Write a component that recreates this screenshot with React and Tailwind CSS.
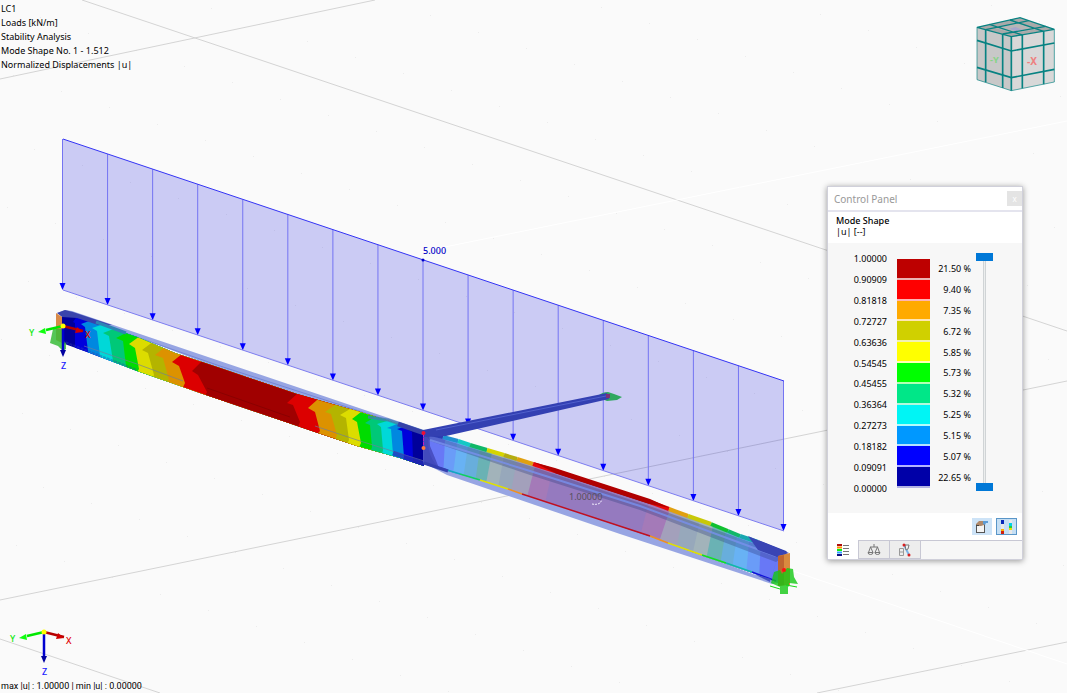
import { useState } from 'react'
import clsx from 'clsx'

const LEGEND = [
  { color: 'bg-[#bd0000]', share: '21.50 %' },
  { color: 'bg-[#ff0000]', share: '9.40 %' },
  { color: 'bg-[#ffaa00]', share: '7.35 %' },
  { color: 'bg-[#d0d000]', share: '6.72 %' },
  { color: 'bg-[#ffff00]', share: '5.85 %' },
  { color: 'bg-[#00ff00]', share: '5.73 %' },
  { color: 'bg-[#00e788]', share: '5.32 %' },
  { color: 'bg-[#00f5f5]', share: '5.25 %' },
  { color: 'bg-[#0098ff]', share: '5.15 %' },
  { color: 'bg-[#0000ff]', share: '5.07 %' },
  { color: 'bg-[#0000a8]', share: '22.65 %' },
]

const VALUES = [
  '1.00000', '0.90909', '0.81818', '0.72727', '0.63636', '0.54545',
  '0.45455', '0.36364', '0.27273', '0.18182', '0.09091', '0.00000',
]

// Each band starts at its own edge and runs to the end of the beam,
// so the next band simply paints over it.
const LEFT_BANDS = [
  ['#00009a', '62,310 62,350'],
  ['#0000dc', '78,315 73,322 75,323 75,348 74,354'],
  ['#0088e0', '92,320 81,324 85,327 88,351 86,358'],
  ['#00d8d8', '104,324 92,328 97,331 100,356 98,364'],
  ['#00c878', '116,328 103,333 109,336 113,361 110,370'],
  ['#00dc00', '128,332 116,338 123,341 126,366 122,376'],
  ['#dcdc00', '140,336 129,344 135,348 139,369 132,380'],
  ['#b4b400', '154,341 142,350 148,353 154,375 148,388'],
  ['#dc9200', '165,347 155,355 163,358 169,380 162,394'],
  ['#dc0000', '182,354 172,362 179,366 185,383 178,398'],
  ['#a00000', '202,361 192,371 198,375 207,392 200,406'],
  ['#dc0000', '297,394 287,403 293,405 300,422 294,436'],
  ['#dc9200', '317,400 308,408 315,412 320,431 312,440'],
  ['#b4b400', '335,405 325,412 331,414 337,435 332,448'],
  ['#dcdc00', '350,409 340,415 346,418 349,440 344,450'],
  ['#00dc00', '361,412 352,419 357,422 361,443 356,454'],
  ['#00c878', '375,417 365,423 370,425 372,447 368,458'],
  ['#00d8d8', '387,421 377,424 381,427 383,450 380,462'],
  ['#0088e0', '397,424 387,428 391,429 393,454 390,464'],
  ['#0000dc', '407,426 397,429 402,431 404,457 400,468'],
  ['#00009a', '414,428 408,430 412,432 413,459 412,470'],
]

const RIGHT_BANDS = [
  ['#4950c4', '423,430 423,470'],
  ['#6878f6', '429,430 430,446 435,458 443,478'],
  ['#6a9cf8', '445,440 443,478'],
  ['#68b2f4', '457,444 452,482'],
  ['#68aedc', '468,446 462,486'],
  ['#6ab2b4', '480,448 474,490'],
  ['#a2b3ba', '492,452 484,494'],
  ['#97a8bb', '504,456 496,498'],
  ['#a3a0bb', '517,460 509,502'],
  ['#a47ab8', '536,462 525,505'],
  ['#957abf', '553,468 543,512'],
  ['#a47ab8', '651,494 639,540'],
  ['#a3a0bb', '671,506 658,545'],
  ['#97a8bb', '684,510 676,550'],
  ['#a2b3ba', '701,516 692,556'],
  ['#6ab2b4', '714,520 706,560'],
  ['#68aedc', '727,524 720,565'],
  ['#68b2f4', '738,528 732,570'],
  ['#6a9cf8', '750,532 746,575'],
  ['#6878f6', '761,536 759,580'],
]

const TOP_FLANGE = [
  ['#2c3cb0', 423, 432, 443, 437],
  ['#2090d0', 443, 437, 458, 441],
  ['#14c8c4', 458, 441, 470, 445],
  ['#10b868', 470, 445, 487, 450],
  ['#d6d400', 487, 450, 504, 455],
  ['#b4ac10', 504, 455, 517, 459],
  ['#e0a010', 517, 459, 533, 464],
  ['#e80808', 533, 464, 555, 471],
  ['#a00000', 555, 471, 650, 502],
  ['#e80808', 650, 502, 669, 509],
  ['#e0a010', 669, 509, 688, 516],
  ['#c8c808', 688, 516, 711, 524],
  ['#10c030', 711, 524, 728, 531],
  ['#10b868', 728, 531, 740, 536],
  ['#18a8b0', 740, 536, 758, 542],
  ['#2c3cb0', 758, 542, 786, 553],
]

const BOTTOM_FLANGE = [
  ['#2838b8', 423, 463, 447, 470],
  ['#10a8c0', 447, 470, 460, 474],
  ['#10d060', 460, 474, 480, 480],
  ['#e0e000', 480, 480, 508, 489],
  ['#f09020', 508, 489, 522, 494],
  ['#c01020', 522, 494, 650, 536],
  ['#f09020', 650, 536, 668, 543],
  ['#e0e000', 668, 543, 702, 555],
  ['#10e020', 702, 555, 726, 563],
  ['#10b8a8', 726, 563, 752, 572],
  ['#1010d8', 752, 572, 776, 581],
]

function gridDots() {
  const dots = []
  for (let i = -20; i <= 24; i++) {
    for (let j = -8; j <= 8; j++) {
      const x = Math.round(520 + i * 48 + j * 123)
      const y = Math.round(180 + i * 16.3 - j * 25.2)
      if (x > 0 && x < 1067 && y > 0 && y < 693) dots.push([x, y])
    }
  }
  return dots
}

const DOTS = gridDots()
const ARROWS = Array.from({ length: 17 }, (_, i) => {
  const t = i / 16
  return { x: 62.5 + 721 * t, top: 139 + 242 * t, tip: 290 + 241 * t }
})

function LoadDiagram() {
  return (
    <g>
      <polygon points="63,139 784,381 784,531 63,290" fill="#0000dc" fillOpacity="0.19" />
      {ARROWS.map((a) => (
        <g key={a.x}>
          <line x1={a.x} y1={a.top} x2={a.x} y2={a.tip - 5} stroke="#7474f2" />
          <path d={`M${a.x - 3} ${a.tip - 7}h6l-3 7z`} fill="#0000ff" />
        </g>
      ))}
      <line x1="63" y1="139" x2="784" y2="381" stroke="#3434f4" />
      <line x1="63" y1="290" x2="784" y2="531" stroke="#7c7cf0" />
      <circle cx="423" cy="260" r="1.5" fill="#0000c8" />
      <text x="423" y="254" fill="#0000c8" className="text-[9px] font-medium">5.000</text>
    </g>
  )
}

function Beam() {
  return (
    <g>
      <defs>
        <clipPath id="leftBeam">
          <path d="M62 314 70 313 87 320 137 337 175 353 220 368 297 394 360 412 405 426 424 431V466L400 458 357 446 315 432 200 393 183 387 137 371 87 352 62 343Z" />
        </clipPath>
        <clipPath id="rightBeam">
          <path d="M423 431 487 450 533 465 650 503 713 526 786 553 779 583 753 573 703 556 655 538 520 493 480 480 423 464Z" />
        </clipPath>
      </defs>

      {/* undeformed beam, left span */}
      <path d="M57 313 65 310 72 311 424 430 424 435 300 396 205 363 140 338Z" fill="#97a5e3" />
      <path d="M68 313 220 366 424 432" stroke="#7486d6" fill="none" />
      <g clipPath="url(#leftBeam)">
        {LEFT_BANDS.map(([color, edge]) => (
          <polygon key={edge} points={`500,300 ${edge} 500,500`} fill={color} />
        ))}
        <path d="M84 346 137 364 183 381 M315 426 357 440 424 461" stroke="#707c9a" strokeOpacity=".65" fill="none" />
        <path d="M62 341 88 351 137 370" stroke="#3040b0" strokeWidth="2" strokeOpacity=".4" strokeDasharray="3 1" fill="none" />
        <path d="M207 388 290 417" stroke="#8a0000" fill="none" />
        <path d="M393 453 424 464" stroke="#2a34b8" strokeWidth="5" strokeOpacity=".7" fill="none" />
      </g>
      <path d="M57 313 65 310 73 312 112 325 98 325 77 318 62 317Z" fill="#3944ac" />
      <path d="M96 322 126 333" stroke="#2f84b4" strokeWidth="3" />
      <path d="M368 417 388 420 424 432" stroke="#4080b0" strokeWidth="3" strokeOpacity=".8" fill="none" />
      <path d="M398 424 424 433" stroke="#3642a8" strokeWidth="5" />

      {/* undeformed beam, right span */}
      <path d="M424 463 460 474 520 493 655 538 778 583 772 584 620 534 447 475Z" fill="#97a5e3" />
      <g clipPath="url(#rightBeam)">
        {RIGHT_BANDS.map(([color, edge]) => (
          <polygon key={edge} points={`850,300 ${edge} 850,700`} fill={color} />
        ))}
        <path d="M423 433 533 467 655 508 786 555 776 562 640 510 530 475 430 441Z" fill="#304080" fillOpacity=".35" />
        <path d="M430 440 530 471 640 506 776 556" stroke="#7890ec" strokeWidth="2" strokeOpacity=".8" fill="none" />
        <path d="M424 435V463L442 470C430 461 428 451 428 438Z" fill="#424abc" />
      </g>
      {TOP_FLANGE.map(([color, x1, y1, x2, y2]) => (
        <line key={x1} x1={x1} y1={y1} x2={x2} y2={y2} stroke={color} strokeWidth="4" />
      ))}
      <path d="M533 462 555 468 650 499 670 508 650 504 555 473Z" fill="#b00000" />
      {BOTTOM_FLANGE.map(([color, x1, y1, x2, y2]) => (
        <line key={x1} x1={x1} y1={y1} x2={x2} y2={y2} stroke={color} strokeWidth="1.5" />
      ))}
      <path d="M424 463 448 471" stroke="#3440b0" strokeWidth="3" />
      <path d="M748 536 789 553 777 557 758 550Z" fill="#3944b4" />
      <path d="M778 556 770 582 754 574 771 579Z" fill="#4450c0" />
      <text x="569" y="500" fill="#55505c" className="text-[9px]">1.00000</text>
      <path d="M592 504q5 1 8-1l2-3" stroke="#f4f0ff" strokeDasharray="2 1" fill="none" />

      {/* lateral member */}
      <path d="M598 396q4-4 10-4l6 2 8 3-5 3-10 1-5-2-6-1z" fill="#30a860" />
      <path d="M423 430 607 393 609 399 446 436 424 437Z" fill="#3340b2" />
      <path d="M436 430 606 396" stroke="#5060cc" />
      <rect x="606" y="394" width="4" height="4" fill="#7c3078" />
      <line x1="423.5" y1="434" x2="423.5" y2="449" stroke="#c020c0" strokeDasharray="3 1" />
      <circle cx="423.5" cy="433" r="2" fill="#f01030" />
      <circle cx="423.5" cy="448" r="2" fill="#ff7a3c" />
    </g>
  )
}

function Supports() {
  return (
    <g>
      <path d="M56 313 62 317V343L56 340Z" fill="#d88a48" />
      <path d="M53 329h9v12l4 2v6l-3 2-5-5-8-3z" fill="#38bc38" fillOpacity=".85" />
      <path d="M778 556 790 553V585L778 586Z" fill="#d98a3e" />
      <path d="M778 556 784 555V585L778 586Z" fill="#c06430" />
      <path d="M774 572 780 570 782 574 787 568 793 569 794 577 798 584 789 583V586L788 587V594H780V587L771 583Z" fill="#14c814" fillOpacity=".8" />
      <path d="M770 586 780 589 M786 585 797 587" stroke="#14d814" fill="none" />
      <circle cx="784" cy="570" r="2" fill="#ff1010" />
    </g>
  )
}

function Axes({ x, y }) {
  return (
    <g transform={`translate(${x} ${y})`}>
      <path d="M0 0 20 5" stroke="#b40000" strokeWidth="2.5" />
      <path d="M14 1 20 6 12 7Z" fill="#d00000" />
      <path d="M0 0-17 4" stroke="#00e800" strokeWidth="2.5" />
      <path d="M-25 6-18 2-17 8Z" fill="#10ff10" />
      <path d="M0 0V24" stroke="#0000d0" strokeWidth="2.5" />
      <path d="M-3 24H3L0 31Z" fill="#0000a0" />
      <circle r="2.5" fill="#ffff00" />
      <text x="-34" y="10" fill="#10e810" className="text-[9px] font-medium">Y</text>
      <text x="22" y="12" fill="#e00000" className="text-[9px] font-medium">X</text>
      <text x="-2" y="43" fill="#2020ff" className="text-[9px] font-medium">Z</text>
    </g>
  )
}

function Scene() {
  return (
    <svg viewBox="0 0 1067 693" className="absolute inset-0 h-full w-full" role="img" aria-label="Mode Shape">
      {DOTS.map(([x, y]) => (
        <rect key={`${x}-${y}`} x={x} y={y} width="1" height="1" fill="#ececec" />
      ))}
      <g stroke="#d4d4d4" fill="none">
        <path d="M82 0 1067 331" />
        <path d="M0 79 375 0" />
        <path d="M0 600 1067 381" />
        <path d="M0 639 160 693" />
        <path d="M817 693 1067 642" />
      </g>
      <g stroke="#ffffff" strokeWidth="1">
        <path d="M420 252 1067 121" />
        <path d="M784 568 1067 664" />
      </g>
      <LoadDiagram />
      <Beam />
      <Supports />
      <Axes x={63} y={326} />
      <Axes x={44} y={632} />
    </svg>
  )
}

function ViewCube() {
  return (
    <svg viewBox="45 30 246 234" className="absolute top-[15px] right-[10px] h-[78px] w-[82px]" role="img" aria-label="View">
      <path d="M51 67 154 95V257L51 224Z" fill="#c8c8c8" />
      <path d="M154 95 283 73V231L154 257Z" fill="#d8d8d8" />
      <path d="M51 67 180 38 283 73 154 95Z" fill="#a9a9a9" />
      <path d="M101 68 173 55 231 72 164 85Z" fill="#b6b6b6" />
      <path d="M148 71 166 66 188 75 165 78Z" fill="#a6a6cc" />
      <g stroke="#078282" fill="none" strokeWidth="5">
        <path d="M154 95V257M77 74V232M128 87V249M187 90V250M251 79V238" />
        <path d="M51 106 154 138 283 114M51 187 154 218 283 193" />
        <path d="M77 74 206 47M128 87 257 64M187 90 88 58M251 79 150 45" strokeWidth="4" />
        <path d="M51 67 180 38 283 73 154 95Z" strokeWidth="4" />
        <path d="M51 67V224L154 257 283 231V73" strokeWidth="2" />
      </g>
      <text x="90" y="175" fill="#86d486" className="text-[28px] font-bold">-Y</text>
      <text x="201" y="180" fill="#ee8080" className="text-[30px] font-bold">-X</text>
    </svg>
  )
}

function DisplayIcon() {
  return (
    <svg viewBox="0 0 14 14" className="h-3.5 w-3.5 shrink-0">
      <rect x="1.5" y="4.5" width="8" height="8" fill="#f4f4f4" stroke="#555" />
      <path d="M1 4 4 1 9 1 9 5 6 6 2 6Z" fill="#b0896a" />
      <path d="M1 5.500h3" stroke="#444" />
      <path d="M8 1h5v2h-2l-1 2-2-1z" fill="#5c9cd6" />
    </svg>
  )
}

function ScaleIcon() {
  return (
    <svg viewBox="0 0 14 14" className="h-3.5 w-3.5 shrink-0">
      <rect x="1" width="3" height="14" fill="#e8e8e8" />
      <rect x="1" width="3" height="4" fill="#0828b8" />
      <rect x="1" y="9" width="3" height="2" fill="#ffb000" />
      <rect x="1" y="11" width="3" height="3" fill="#d02010" />
      <rect x="9" width="3" height="14" fill="#e8e8e8" />
      <rect x="9" y="3" width="3" height="3" fill="#00d0e8" />
      <rect x="9" y="6" width="3" height="2" fill="#20d040" />
      <rect x="9" y="8" width="3" height="2" fill="#e8e000" />
    </svg>
  )
}

function LegendIcon() {
  return (
    <svg viewBox="0 0 12 12" className="h-3 w-3">
      <path d="M0 1h5" stroke="#b01010" strokeWidth="2" />
      <path d="M0 3.500h5" stroke="#ff9000" strokeWidth="2" />
      <path d="M0 6h5" stroke="#10f010" strokeWidth="2" />
      <path d="M0 8.500h5" stroke="#30a0ff" strokeWidth="2" />
      <path d="M0 11h5" stroke="#101080" strokeWidth="2" />
      <path d="M6 1.500h6M6 4.500h6M6 7.500h6M6 10.500h6" stroke="#777" />
    </svg>
  )
}

function BalanceIcon() {
  return (
    <svg viewBox="0 0 14 14" className="h-3.5 w-3.5" fill="none" stroke="#777">
      <path d="M7 1v3M3 4h8M3.500 4 1.500 9.500M3.500 4 6 9.500M10.500 4 8 9.500M10.500 4 12.500 9.500" />
      <path d="M1 9.500h5q0 2-2.500 2T1 9.500M8 9.500h5q0 2-2.500 2T8 9.500" />
    </svg>
  )
}

function FactorIcon() {
  return (
    <svg viewBox="0 0 14 14" className="h-3.5 w-3.5">
      <path d="M1.500 5.500h4v7h-4zM2 9h3" fill="none" stroke="#999" />
      <path d="M6 2 11 12" stroke="#7cb4e8" strokeWidth="2" />
      <path d="M7 2h4l-1 4-2 1z" fill="#f4f4f4" stroke="#777" />
      <circle cx="6" cy="2" r="1.5" fill="#d82020" />
      <circle cx="11" cy="12" r="1.5" fill="#d82020" />
    </svg>
  )
}

const TABS = [
  { id: 'legend', label: 'Color scale', Icon: LegendIcon },
  { id: 'factors', label: 'Factors', Icon: BalanceIcon },
  { id: 'filter', label: 'Filter', Icon: FactorIcon },
]

const RANGE =
  'absolute inset-0 m-0 h-full w-full appearance-none bg-transparent pointer-events-none [writing-mode:vertical-lr] [direction:rtl] ' +
  '[&::-webkit-slider-thumb]:appearance-none [&::-webkit-slider-thumb]:pointer-events-auto [&::-webkit-slider-thumb]:h-2 [&::-webkit-slider-thumb]:w-[17px] [&::-webkit-slider-thumb]:bg-[#0078d7]'

function ControlPanel() {
  const [tab, setTab] = useState('legend')
  const [max, setMax] = useState(11)
  const [min, setMin] = useState(0)

  return (
    <section className="absolute top-[186px] right-11 flex w-[196px] flex-col border border-[#d0d0da] bg-[#f7f7f7] shadow-[0_1px_6px_rgba(0,0,0,0.4)]">
      <header className="flex h-[25px] items-center justify-between border-b-2 border-[#e4e4ee] bg-white pl-1.5">
        <h2 className="text-[10px] text-[#999]">Control Panel</h2>
        <button type="button" aria-label="Close" className="h-[15px] w-[15px] bg-[#e4e4e4] text-[8px] leading-3 text-white">x</button>
      </header>
      <div className="h-[31px] bg-white px-2 pt-[3px] leading-[11px]">
        <h3 className="font-medium">Mode Shape</h3>
        <p>|u| [--]</p>
      </div>

      <div className="flex h-[270px] items-start pt-[10px] pl-6">
        <div className="-mt-1 flex h-[250px] w-[35px] flex-col text-right">
          {VALUES.map((v) => (
            <span key={v} className="flex flex-1 items-center justify-end">{v}</span>
          ))}
        </div>
        <div className="mt-1.5 ml-[10px] flex h-[229px] w-[33px] flex-col">
          {LEGEND.map((l) => (
            <span key={l.share} className={clsx('flex-1 border-b-2 border-white/70', l.color)} />
          ))}
        </div>
        <div className="mt-1.5 flex h-[229px] w-[41px] flex-col">
          {LEGEND.map((l) => (
            <span key={l.share} className="flex flex-1 items-center justify-end">{l.share}</span>
          ))}
        </div>
        <div className="relative ml-[5px] h-[238px] w-[17px]">
          <div className="mx-auto h-full w-[3px] border-x border-[#d0d4d6] bg-[#eceeee]" />
          <input type="range" aria-label="Maximum" min="0" max="11" value={max} onChange={(e) => setMax(Number(e.target.value))} className={RANGE} />
          <input type="range" aria-label="Minimum" min="0" max="11" value={min} onChange={(e) => setMin(Number(e.target.value))} className={RANGE} />
        </div>
      </div>

      <div className="flex h-7 items-center justify-end gap-1 border-b border-[#c8c8d4] bg-white pr-[5px]">
        <button type="button" aria-label="Display options" className="flex h-[17px] w-5 items-center justify-center bg-[#cde3f7]">
          <DisplayIcon />
        </button>
        <button type="button" aria-label="Scale options" className="flex h-[17px] w-[21px] items-center justify-center border border-[#5a96c8] bg-[#c6dff4]">
          <ScaleIcon />
        </button>
      </div>
      <div className="flex h-[18px]" role="tablist">
        {TABS.map(({ id, label, Icon }) => (
          <button
            key={id}
            type="button"
            role="tab"
            aria-label={label}
            aria-selected={tab === id}
            onClick={() => setTab(id)}
            className={clsx(
              'flex w-[31px] items-center justify-center border-r border-[#c8c8d4]',
              tab === id ? '-mt-px bg-white' : 'border-b bg-[#ededed]',
            )}
          >
            <Icon />
          </button>
        ))}
      </div>
    </section>
  )
}

export default function App() {
  return (
    <main className="relative flex min-h-screen flex-col justify-between overflow-hidden bg-[#fafafa] font-['Noto_Sans','Open_Sans',sans-serif] text-[9px] leading-[14px] text-black">
      <Scene />
      <div className="relative px-px pt-[2px]">
        <p>LC1</p>
        <p>Loads [kN/m]</p>
        <p>Stability Analysis</p>
        <p>Mode Shape No. 1 - 1.512</p>
        <p>Normalized Displacements |u|</p>
      </div>
      <p className="relative px-px font-[Roboto,sans-serif]">max |u| : 1.00000 | min |u| : 0.00000</p>
      <ViewCube />
      <ControlPanel />
    </main>
  )
}
